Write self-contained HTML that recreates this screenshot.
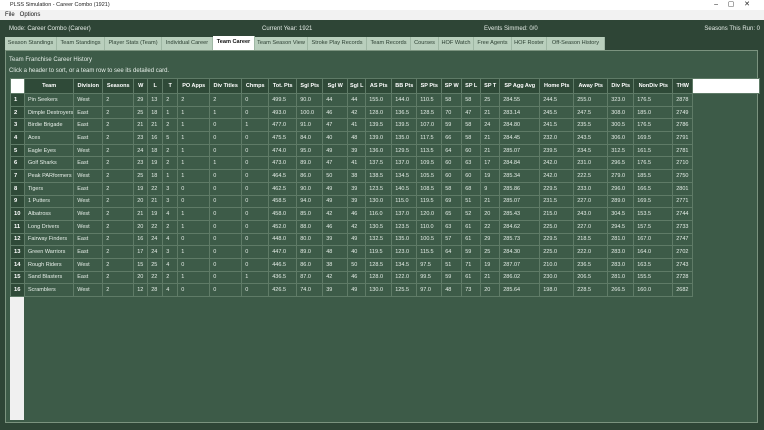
<!DOCTYPE html>
<html><head><meta charset="utf-8"><style>
*{margin:0;padding:0;box-sizing:border-box}
body{width:764px;height:430px;overflow:hidden;background:#2e4536;font-family:"Liberation Sans",sans-serif;position:relative}
.tb{position:absolute;left:0;top:0;width:764px;height:10px;background:#fff;font-size:5.5px;color:#222;line-height:10px;padding-left:10px}
.mb{position:absolute;left:0;top:10px;width:764px;height:10px;background:#f2f2f2;font-size:6px;color:#111;line-height:10px;padding-left:5px}
.t{position:absolute;color:#e4ece6;font-size:6px;white-space:nowrap}
.tabs{position:absolute;left:5px;top:37px;height:13px;width:600px;background:#b9cfbd}
.tab{position:absolute;top:0;height:13px;line-height:13px;font-size:5.6px;color:#2c3f32;text-align:center;border-right:1px solid #9fb7a4;white-space:nowrap}
.tab.a{background:#fff;font-weight:bold;color:#111;top:-1px;height:14px}
.panel{position:absolute;left:5px;top:50px;width:753px;height:373px;background:#3d5b48;border:1px solid #7b937f}
table{position:absolute;left:10px;top:78px;border-collapse:collapse;table-layout:fixed;font-size:5.5px;color:#e6eee8}
td,th{border:1px solid #5f7b67;height:12.7px;padding:0 0 0 3px;white-space:nowrap;overflow:hidden;text-align:left;font-weight:normal}
th{height:15px;background:#2f4a38;font-weight:bold;text-align:center;padding:0;color:#fff}
td.n{background:#2f4a38;font-weight:bold;color:#fff;font-size:5.8px}
th.c{background:#fff}
</style></head><body>
<div class="tb">PLSS Simulation - Career Combo (1921)<span style="position:absolute;right:14px;font-size:7px">–&nbsp;&nbsp;&nbsp;&nbsp;&nbsp;▢&nbsp;&nbsp;&nbsp;&nbsp;&nbsp;✕</span></div>
<div class="mb">File&nbsp;&nbsp;&nbsp;Options</div>
<div class="t" style="left:9px;top:26px">Mode: Career Combo (Career)</div>
<div class="t" style="left:262px;top:26px">Current Year: 1921</div>
<div class="t" style="left:484px;top:26px">Events Simmed: 0/0</div>
<div class="t" style="right:4px;top:26px">Seasons This Run: 0</div>
<div class="panel"></div>
<div class="tabs">
<div class="tab" style="left:0;width:52px">Season Standings</div>
<div class="tab" style="left:52px;width:48px">Team Standings</div>
<div class="tab" style="left:100px;width:57px">Player Stats (Team)</div>
<div class="tab" style="left:157px;width:51px">Individual Career</div>
<div class="tab a" style="left:208px;width:42px">Team Career</div>
<div class="tab" style="left:250px;width:53px">Team Season View</div>
<div class="tab" style="left:303px;width:59px">Stroke Play Records</div>
<div class="tab" style="left:362px;width:44px">Team Records</div>
<div class="tab" style="left:406px;width:28px">Courses</div>
<div class="tab" style="left:434px;width:35px">HOF Watch</div>
<div class="tab" style="left:469px;width:38px">Free Agents</div>
<div class="tab" style="left:507px;width:35px">HOF Roster</div>
<div class="tab" style="left:542px;width:58px">Off-Season History</div>
</div>
<div class="t" style="left:9px;top:57px">Team Franchise Career History</div>
<div class="t" style="left:9px;top:68px">Click a header to sort, or a team row to see its detailed card.</div>
<div style="position:absolute;left:10px;top:296px;width:14px;height:124px;background:#f0f0f0"></div>
<table>
<colgroup><col style="width:14px"><col style="width:47px"><col style="width:29px"><col style="width:31px"><col style="width:14px"><col style="width:15px"><col style="width:15px"><col style="width:32px"><col style="width:32px"><col style="width:27px"><col style="width:28px"><col style="width:26px"><col style="width:25px"><col style="width:18px"><col style="width:26px"><col style="width:25px"><col style="width:25px"><col style="width:20px"><col style="width:19px"><col style="width:19px"><col style="width:40px"><col style="width:34px"><col style="width:34px"><col style="width:26px"><col style="width:39px"><col style="width:20px"><col style="width:67px"></colgroup>
<tr><th class="c"></th><th>Team</th><th>Division</th><th>Seasons</th><th>W</th><th>L</th><th>T</th><th>PO Apps</th><th>Div Titles</th><th>Chmps</th><th>Tot. Pts</th><th>Sgl Pts</th><th>Sgl W</th><th>Sgl L</th><th>AS Pts</th><th>BB Pts</th><th>SP Pts</th><th>SP W</th><th>SP L</th><th>SP T</th><th>SP Agg Avg</th><th>Home Pts</th><th>Away Pts</th><th>Div Pts</th><th>NonDiv Pts</th><th>THW</th><th class="c"></th></tr>
<tr><td class="n">1</td><td>Pin Seekers</td><td>West</td><td>2</td><td>29</td><td>13</td><td>2</td><td>2</td><td>2</td><td>0</td><td>499.5</td><td>90.0</td><td>44</td><td>44</td><td>155.0</td><td>144.0</td><td>110.5</td><td>58</td><td>58</td><td>25</td><td>284.55</td><td>244.5</td><td>255.0</td><td>323.0</td><td>176.5</td><td>2878</td></tr>
<tr><td class="n">2</td><td>Dimple Destroyers</td><td>East</td><td>2</td><td>25</td><td>18</td><td>1</td><td>1</td><td>1</td><td>0</td><td>493.0</td><td>100.0</td><td>46</td><td>42</td><td>128.0</td><td>136.5</td><td>128.5</td><td>70</td><td>47</td><td>21</td><td>283.14</td><td>245.5</td><td>247.5</td><td>308.0</td><td>185.0</td><td>2749</td></tr>
<tr><td class="n">3</td><td>Birdie Brigade</td><td>East</td><td>2</td><td>21</td><td>21</td><td>2</td><td>1</td><td>0</td><td>1</td><td>477.0</td><td>91.0</td><td>47</td><td>41</td><td>139.5</td><td>139.5</td><td>107.0</td><td>59</td><td>58</td><td>24</td><td>284.80</td><td>241.5</td><td>235.5</td><td>300.5</td><td>176.5</td><td>2786</td></tr>
<tr><td class="n">4</td><td>Aces</td><td>East</td><td>2</td><td>23</td><td>16</td><td>5</td><td>1</td><td>0</td><td>0</td><td>475.5</td><td>84.0</td><td>40</td><td>48</td><td>139.0</td><td>135.0</td><td>117.5</td><td>66</td><td>58</td><td>21</td><td>284.45</td><td>232.0</td><td>243.5</td><td>306.0</td><td>169.5</td><td>2791</td></tr>
<tr><td class="n">5</td><td>Eagle Eyes</td><td>West</td><td>2</td><td>24</td><td>18</td><td>2</td><td>1</td><td>0</td><td>0</td><td>474.0</td><td>95.0</td><td>49</td><td>39</td><td>136.0</td><td>129.5</td><td>113.5</td><td>64</td><td>60</td><td>21</td><td>285.07</td><td>239.5</td><td>234.5</td><td>312.5</td><td>161.5</td><td>2781</td></tr>
<tr><td class="n">6</td><td>Golf Sharks</td><td>East</td><td>2</td><td>23</td><td>19</td><td>2</td><td>1</td><td>1</td><td>0</td><td>473.0</td><td>89.0</td><td>47</td><td>41</td><td>137.5</td><td>137.0</td><td>109.5</td><td>60</td><td>63</td><td>17</td><td>284.84</td><td>242.0</td><td>231.0</td><td>296.5</td><td>176.5</td><td>2710</td></tr>
<tr><td class="n">7</td><td>Peak PARformers</td><td>West</td><td>2</td><td>25</td><td>18</td><td>1</td><td>1</td><td>0</td><td>0</td><td>464.5</td><td>86.0</td><td>50</td><td>38</td><td>138.5</td><td>134.5</td><td>105.5</td><td>60</td><td>60</td><td>19</td><td>285.34</td><td>242.0</td><td>222.5</td><td>279.0</td><td>185.5</td><td>2750</td></tr>
<tr><td class="n">8</td><td>Tigers</td><td>East</td><td>2</td><td>19</td><td>22</td><td>3</td><td>0</td><td>0</td><td>0</td><td>462.5</td><td>90.0</td><td>49</td><td>39</td><td>123.5</td><td>140.5</td><td>108.5</td><td>58</td><td>68</td><td>9</td><td>285.86</td><td>229.5</td><td>233.0</td><td>296.0</td><td>166.5</td><td>2801</td></tr>
<tr><td class="n">9</td><td>1 Putters</td><td>West</td><td>2</td><td>20</td><td>21</td><td>3</td><td>0</td><td>0</td><td>0</td><td>458.5</td><td>94.0</td><td>49</td><td>39</td><td>130.0</td><td>115.0</td><td>119.5</td><td>69</td><td>51</td><td>21</td><td>285.07</td><td>231.5</td><td>227.0</td><td>289.0</td><td>169.5</td><td>2771</td></tr>
<tr><td class="n">10</td><td>Albatross</td><td>West</td><td>2</td><td>21</td><td>19</td><td>4</td><td>1</td><td>0</td><td>0</td><td>458.0</td><td>85.0</td><td>42</td><td>46</td><td>116.0</td><td>137.0</td><td>120.0</td><td>65</td><td>52</td><td>20</td><td>285.43</td><td>215.0</td><td>243.0</td><td>304.5</td><td>153.5</td><td>2744</td></tr>
<tr><td class="n">11</td><td>Long Drivers</td><td>West</td><td>2</td><td>20</td><td>22</td><td>2</td><td>1</td><td>0</td><td>0</td><td>452.0</td><td>88.0</td><td>46</td><td>42</td><td>130.5</td><td>123.5</td><td>110.0</td><td>63</td><td>61</td><td>22</td><td>284.62</td><td>225.0</td><td>227.0</td><td>294.5</td><td>157.5</td><td>2733</td></tr>
<tr><td class="n">12</td><td>Fairway Finders</td><td>East</td><td>2</td><td>16</td><td>24</td><td>4</td><td>0</td><td>0</td><td>0</td><td>448.0</td><td>80.0</td><td>39</td><td>49</td><td>132.5</td><td>135.0</td><td>100.5</td><td>57</td><td>61</td><td>29</td><td>285.73</td><td>229.5</td><td>218.5</td><td>281.0</td><td>167.0</td><td>2747</td></tr>
<tr><td class="n">13</td><td>Green Warriors</td><td>East</td><td>2</td><td>17</td><td>24</td><td>3</td><td>1</td><td>0</td><td>0</td><td>447.0</td><td>89.0</td><td>48</td><td>40</td><td>119.5</td><td>123.0</td><td>115.5</td><td>64</td><td>59</td><td>25</td><td>284.30</td><td>225.0</td><td>222.0</td><td>283.0</td><td>164.0</td><td>2702</td></tr>
<tr><td class="n">14</td><td>Rough Riders</td><td>West</td><td>2</td><td>15</td><td>25</td><td>4</td><td>0</td><td>0</td><td>0</td><td>446.5</td><td>86.0</td><td>38</td><td>50</td><td>128.5</td><td>134.5</td><td>97.5</td><td>51</td><td>71</td><td>19</td><td>287.07</td><td>210.0</td><td>236.5</td><td>283.0</td><td>163.5</td><td>2743</td></tr>
<tr><td class="n">15</td><td>Sand Blasters</td><td>East</td><td>2</td><td>20</td><td>22</td><td>2</td><td>1</td><td>0</td><td>1</td><td>436.5</td><td>87.0</td><td>42</td><td>46</td><td>128.0</td><td>122.0</td><td>99.5</td><td>59</td><td>61</td><td>21</td><td>286.02</td><td>230.0</td><td>206.5</td><td>281.0</td><td>155.5</td><td>2728</td></tr>
<tr><td class="n">16</td><td>Scramblers</td><td>West</td><td>2</td><td>12</td><td>28</td><td>4</td><td>0</td><td>0</td><td>0</td><td>426.5</td><td>74.0</td><td>39</td><td>49</td><td>130.0</td><td>125.5</td><td>97.0</td><td>48</td><td>73</td><td>20</td><td>285.64</td><td>198.0</td><td>228.5</td><td>266.5</td><td>160.0</td><td>2682</td></tr>
</table>
</body></html>
